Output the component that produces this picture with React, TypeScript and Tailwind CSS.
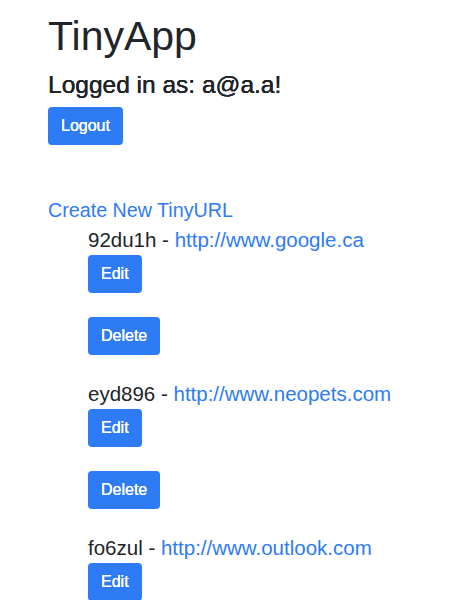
import React from 'react';

const urls = [
  { id: '92du1h', long: 'http://www.google.ca' },
  { id: 'eyd896', long: 'http://www.neopets.com' },
  { id: 'fo6zul', long: 'http://www.outlook.com' },
];

function Btn({ children }: { children: React.ReactNode }) {
  return (
    <button className="h-[38px] px-[13px] rounded-[4px] bg-[#2e7bf6] text-white text-[16px] leading-[24px] [text-shadow:0_0_0.6px_#ffffff,0_0_0.6px_#ffffff]">
      {children}
    </button>
  );
}

export default function App() {
  return (
    <div
      className="h-[600px] overflow-hidden bg-white text-[#212529] pl-[48px] pt-[12px]"
      style={{ fontFamily: '"Liberation Sans", Arial, sans-serif' }}
    >
      <h1 className="text-[41px] leading-[48px] mb-[10px]">TinyApp</h1>
      <h4 className="text-[24.5px] leading-[29px] mb-[8px] [text-shadow:0_0_0.6px_#212529,0_0_0.6px_#212529]">Logged in as: a@a.a!</h4>
      <Btn>Logout</Btn>

      <div className="mt-[50px]">
        <a className="block text-[19.7px] leading-[30px] text-[#2e7bf6]">Create New TinyURL</a>
        <ul className="pl-10 list-none">
          {urls.map(u => (
            <li key={u.id} className="flex flex-col items-start">
              <p className="text-[20.5px] leading-[30px]">
                {u.id} - <a className="text-[#2e7bf6]">{u.long}</a>
              </p>
              <Btn>Edit</Btn>
              <div className="mt-[24px] mb-[24px]">
                <Btn>Delete</Btn>
              </div>
            </li>
          ))}
        </ul>
      </div>
    </div>
  );
}
